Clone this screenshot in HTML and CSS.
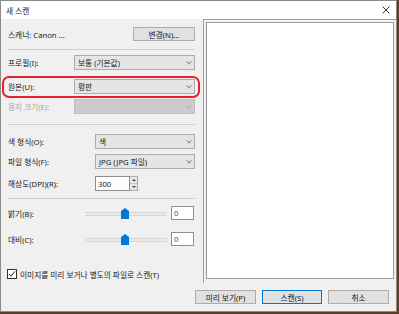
FILE: index.html
```html
<!DOCTYPE html>
<html lang="ko">
<head>
  <meta charset="UTF-8">
  <title>새 스캔</title>
  <link rel="stylesheet" href="styles.css">
</head>
<body>
  <div class="window">
    <div class="titlebar">
      <span>새 스캔</span>
      <svg class="close" width="8" height="8" viewBox="0 0 8 8"><path d="M0.5 0.5 L7.5 7.5 M7.5 0.5 L0.5 7.5" stroke="#333" stroke-width="1"/></svg>
    </div>

    <div class="main">
      <div class="left">
        <div class="row scanner">
          <span>스캐너: Canon ...</span>
          <button class="btn small">변경(N)...</button>
        </div>
        <div class="sep sep1"></div>

        <div class="row r-profile">
          <label class="lbl w66">프로필(I):</label>
          <div class="select">보통 (기본값)<span class="chev"></span></div>
        </div>
        <div class="row r-orig highlight">
          <label class="lbl w66">원본(U):</label>
          <div class="select">평판<span class="chev"></span></div>
        </div>
        <div class="row r-paper">
          <label class="lbl w66 off">용지 크기(E):</label>
          <div class="select disabled"><span class="chev"></span></div>
        </div>
        <div class="sep sep2"></div>

        <div class="row r-color">
          <label class="lbl w87">색 형식(O):</label>
          <div class="select">색<span class="chev"></span></div>
        </div>
        <div class="row r-file">
          <label class="lbl w87">파일 형식(F):</label>
          <div class="select">JPG (JPG 파일)<span class="chev"></span></div>
        </div>
        <div class="row r-dpi">
          <label class="lbl w87">해상도(DPI)(R):</label>
          <div class="textbox dpi">300</div>
          <div class="spin">
            <span class="up"></span>
            <span class="down"></span>
          </div>
        </div>
        <div class="sep sep3"></div>

        <div class="row r-bright">
          <label class="lbl w77">밝기(B):</label>
          <div class="slider"><svg class="thumb" width="8" height="11" viewBox="0 0 8 11"><polygon points="0,3 4,0 8,3 8,11 0,11" fill="#0078d7"/></svg></div>
          <div class="textbox num">0</div>
        </div>
        <div class="row r-contrast">
          <label class="lbl w77">대비(C):</label>
          <div class="slider"><svg class="thumb" width="8" height="11" viewBox="0 0 8 11"><polygon points="0,3 4,0 8,3 8,11 0,11" fill="#0078d7"/></svg></div>
          <div class="textbox num">0</div>
        </div>

        <div class="row r-check">
          <span class="checkbox"><svg width="8" height="8" viewBox="0 0 8 8"><path d="M1 4 L3 6.2 L7 1.2" fill="none" stroke="#222" stroke-width="1"/></svg></span>
          <span>이미지를 미리 보거나 별도의 파일로 스캔(T)</span>
        </div>
      </div>

      <div class="right">
        <div class="preview"></div>
      </div>
    </div>

    <div class="footer">
      <button class="btn">미리 보기(P)</button>
      <button class="btn default">스캔(S)</button>
      <button class="btn">취소</button>
    </div>
  </div>
</body>
</html>
```

FILE: styles.css
```css
* {
  box-sizing: border-box;
}

body {
  margin: 0;
  background: #5a3d24;
  font-family: "Noto Sans", "Noto Sans CJK KR", sans-serif;
  font-size: 7.7px;
  color: #1a1a1a;
}

.window {
  width: 397px;
  height: 312px;
  background: #f0f0f0;
  border: 1px solid #8a8a8a;
  display: flex;
  flex-direction: column;
}

.titlebar {
  height: 18px;
  background: #fff;
  display: flex;
  align-items: center;
  justify-content: space-between;
  padding: 0 6px 0 5px;
}

.main {
  display: flex;
  height: 264px;
}

.left {
  width: 202px;
  padding: 0 8px 0 7px;
}

.right {
  flex: 1;
  border-left: 1px solid #a0a0a0;
  border-top: 1px solid #a0a0a0;
  padding: 2px 2px 4px 2px;
}

.preview {
  height: 257px;
  background: #fff;
  border: 1px solid #9a9a9a;
}

.row {
  display: flex;
  align-items: center;
  height: 15px;
}

.lbl {
  flex-shrink: 0;
}
.w66 { width: 66px; }
.w87 { width: 87px; }
.w77 { width: 77px; }
.off { color: #a6a6a6; }

.scanner {
  margin-top: 8px;
  height: 14px;
  justify-content: space-between;
}

.sep {
  height: 1px;
  background: #cfcfcf;
}
.sep1 { margin-top: 8px; }
.sep2 { margin-top: 10px; }
.sep3 { margin-top: 7px; }

.r-profile { margin-top: 5px; }
.r-orig { margin-top: 9px; }
.r-paper { margin-top: 5px; }
.r-color { margin-top: 9px; }
.r-file { margin-top: 5px; }
.r-dpi { margin-top: 7px; }
.r-bright { margin-top: 7px; height: 14px; }
.r-contrast { margin-top: 12px; height: 14px; }
.r-check { margin-top: 23px; height: 10px; margin-left: -1px; }

.highlight {
  position: relative;
}
.highlight::after {
  content: "";
  position: absolute;
  left: -6px;
  right: -5px;
  top: -3px;
  bottom: -4px;
  border: 2px solid #e3232b;
  border-radius: 7px;
}

.select {
  flex: 1;
  height: 15px;
  background: #e5e5e5;
  border: 1px solid #adadad;
  padding-left: 3px;
  display: flex;
  align-items: center;
  position: relative;
}
.select.disabled {
  background: #cccccc;
  border-color: #bfbfbf;
}

.chev {
  margin-left: auto;
  margin-right: 3px;
  width: 4px;
  height: 4px;
  border-right: 1px solid #8a8a8a;
  border-bottom: 1px solid #8a8a8a;
  transform: rotate(45deg) translate(-1px, -1px);
}
.disabled .chev {
  border-color: #b4b4b4;
}

.textbox {
  height: 15px;
  background: #fff;
  border: 1px solid #8f8f8f;
  padding-left: 2px;
  display: flex;
  align-items: center;
}
.dpi {
  width: 35px;
}
.num {
  width: 23px;
  height: 14px;
  margin-left: 4px;
  color: #2b4fa8;
}

.spin {
  width: 8px;
  height: 15px;
  border: 1px solid #adadad;
  border-left: 0;
  background: #e5e5e5;
  display: flex;
  flex-direction: column;
}
.spin span {
  flex: 1;
  display: flex;
  align-items: center;
  justify-content: center;
}
.spin .up {
  border-bottom: 1px solid #c8c8c8;
}
.spin .up::before {
  content: "";
  border-left: 2px solid transparent;
  border-right: 2px solid transparent;
  border-bottom: 2px solid #444;
}
.spin .down::before {
  content: "";
  border-left: 2px solid transparent;
  border-right: 2px solid transparent;
  border-top: 2px solid #444;
}

.slider {
  width: 82px;
  height: 12px;
  display: flex;
  align-items: flex-end;
  background: linear-gradient(#f0f0f0 5px, #d6d6d6 5px, #d6d6d6 6px, #e7eaea 6px, #e7eaea 8px, #d6d6d6 8px, #d6d6d6 9px, #f0f0f0 9px);
}
.thumb {
  margin-left: 36px;
}

.checkbox {
  width: 10px;
  height: 10px;
  border: 1px solid #333;
  background: #fff;
  display: flex;
  align-items: center;
  justify-content: center;
  margin-right: 3px;
}

.footer {
  flex: 1;
  display: flex;
  justify-content: flex-end;
  gap: 6px;
  padding: 7px 7px 0 0;
}

.btn {
  height: 14px;
  width: 61px;
  background: #e1e1e1;
  border: 1px solid #adadad;
  font-family: inherit;
  font-size: 7.7px;
  color: #111;
  padding: 0;
}
.btn.small {
  width: 62px;
}
.btn.default {
  border-color: #0078d7;
  width: 60px;
}
```
